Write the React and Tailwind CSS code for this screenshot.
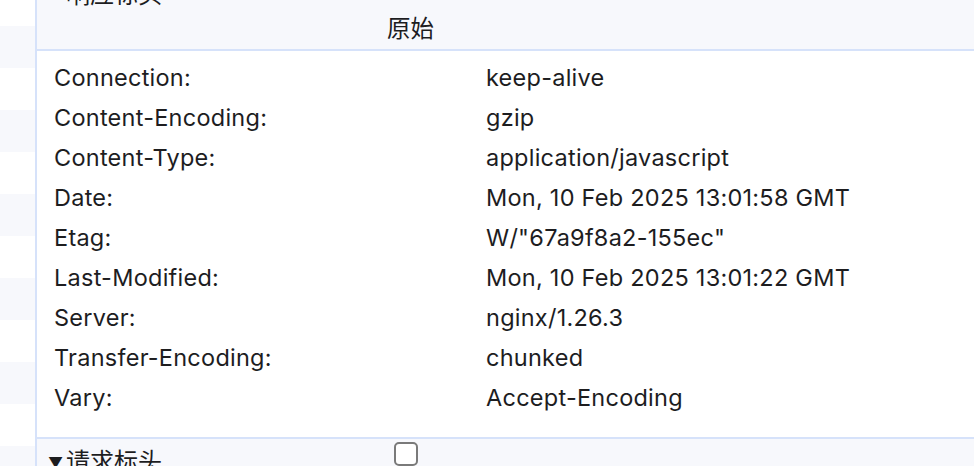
import React from 'react';

const headers = [
  ['Connection:', 'keep-alive'],
  ['Content-Encoding:', 'gzip'],
  ['Content-Type:', 'application/javascript'],
  ['Date:', 'Mon, 10 Feb 2025 13:01:58 GMT'],
  ['Etag:', 'W/"67a9f8a2-155ec"'],
  ['Last-Modified:', 'Mon, 10 Feb 2025 13:01:22 GMT'],
  ['Server:', 'nginx/1.26.3'],
  ['Transfer-Encoding:', 'chunked'],
  ['Vary:', 'Accept-Encoding'],
];

const App = () => {
  return (
    <div className="flex w-[974px] h-[466px] overflow-hidden bg-white text-[#1d1d1f]" style={{ fontFamily: 'Inter, "Noto Sans CJK SC", sans-serif' }}>
      {/* left striped gutter */}
      <div className="w-[35px] shrink-0 flex flex-col">
        <div className="h-[26px] shrink-0 bg-white" />
        {Array.from({ length: 11 }).map((_, i) => (
          <div key={i} className={`h-[42px] shrink-0 ${i % 2 === 0 ? 'bg-[#f7f8fc]' : 'bg-white'}`} />
        ))}
      </div>

      {/* main panel */}
      <div className="flex-1 flex flex-col border-l-2 border-[#d6e2fa]">
        {/* response headers section */}
        <div className="h-[51px] shrink-0 bg-[#f7f8fc] border-b-2 border-[#d6e2fa]">
          <div className="flex items-center pl-[13px] -mt-[20px] h-[30px] text-[24px] leading-none">
            <span className="text-[13px] w-[16px]">▾</span>
            <span>响应标头</span>
          </div>
          <div className="pl-[350px] mt-[4px] text-[23.5px] leading-[30px]">原始</div>
        </div>

        <div className="h-[386px] shrink-0 pt-[7px]">
          {headers.map(([k, v]) => (
            <div key={k} className="flex h-[40px] items-center text-[23.5px] tracking-[0.25px]">
              <div className="w-[449px] pl-[17px] shrink-0">{k}</div>
              <div>{v}</div>
            </div>
          ))}
        </div>

        {/* request headers section */}
        <div className="flex-1 bg-[#f7f8fc] border-t-2 border-[#d6e2fa] relative">
          <div className="flex items-center pl-[11px] pt-[11px] text-[24px] leading-none">
            <span className="text-[15px] w-[18px]">▼</span>
            <span>请求标头</span>
          </div>
          <div className="absolute left-[357px] top-[3px] w-[24px] h-[24px] rounded-[5px] border-2 border-[#7a7a7a] bg-white" />
        </div>
      </div>
    </div>
  );
};

export default App;
